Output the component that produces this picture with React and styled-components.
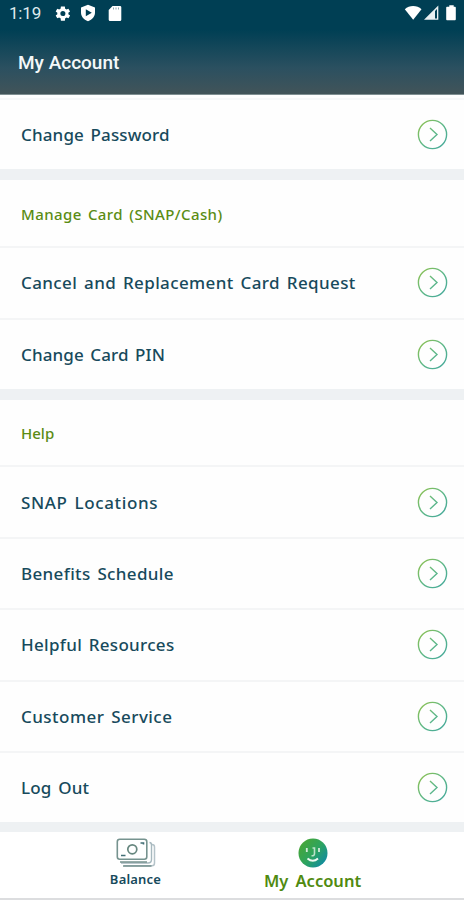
import React from 'react';
import styled, { createGlobalStyle } from 'styled-components';

const GlobalStyle = createGlobalStyle`
    * {
        box-sizing: border-box;
    }
    body {
        margin: 0;
        background: #ffffff;
    }
`;

const Screen = styled.div`
    width: 464px;
    height: 900px;
    display: flex;
    flex-direction: column;
    overflow: hidden;
    background: #fefefe;
    font-family: 'Noto Sans', sans-serif;
    font-weight: 500;
    color: #174a5c;
`;

const Header = styled.header`
    height: 95px;
    flex-shrink: 0;
    background: linear-gradient(#003f54 0px, #003f54 30px, #2b5060 68px, #425459 94px);
    border-bottom: 1px solid #7f8f92;
    color: #f4f8f9;
    font-family: Roboto, sans-serif;
`;

const StatusBar = styled.div`
    height: 26px;
    padding: 0 7px 0 9px;
    display: flex;
    align-items: center;
    justify-content: space-between;
`;

const StatusGroup = styled.div`
    display: flex;
    align-items: center;
`;

const Clock = styled.span`
    width: 44px;
    font-size: 17px;
    font-weight: 400;
    line-height: 26px;
    letter-spacing: -0.2px;
    color: #dfeaed;
`;

const PageTitle = styled.h1`
    margin: 0;
    padding: 25px 0 0 18px;
    font-size: 19px;
    line-height: 24px;
    font-weight: 500;
`;

const Section = styled.section`
    flex-shrink: 0;
    border-bottom: ${({ $gap }) => $gap || 11}px solid #eef1f3;
`;

const TopDivider = styled.div`
    height: 5px;
    border-bottom: 2px solid #f7f8f9;
`;

const SectionTitle = styled.h2`
    margin: 0;
    height: ${({ $height }) => $height || 68}px;
    padding: 1px 21px 0;
    display: flex;
    align-items: center;
    border-bottom: 2px solid #f4f5f6;
    font-size: 15px;
    font-weight: 500;
    letter-spacing: ${({ $tracking }) => $tracking || 0}px;
    word-spacing: 2px;
    color: #5a8c14;
`;

const Row = styled.div`
    height: ${({ $height }) => $height || 71.3}px;
    padding: 0 16px 0 21px;
    display: flex;
    align-items: center;
    justify-content: space-between;

    & + & {
        border-top: 2px solid #f4f5f6;
    }
`;

const RowLabel = styled.span`
    font-size: 17px;
    line-height: 24px;
    letter-spacing: ${({ $tracking }) => $tracking || 0}px;
    word-spacing: 2px;
    white-space: nowrap;
    padding-top: 1px;
`;

const TabBar = styled.nav`
    height: 67.5px;
    flex-shrink: 0;
    display: flex;
    background: #ffffff;
    border-bottom: 2px solid #dcdddf;
`;

const Tab = styled.div`
    width: ${({ $width }) => $width}px;
    margin-left: ${({ $offset }) => $offset}px;
    padding-top: 6px;
    display: flex;
    flex-direction: column;
    align-items: center;
`;

const TabLabel = styled.span`
    font-size: ${({ $active }) => ($active ? 16.5 : 13)}px;
    line-height: ${({ $active }) => ($active ? 25 : 23)}px;
    font-weight: 600;
    letter-spacing: ${({ $active }) => ($active ? 0 : 0.2)}px;
    word-spacing: ${({ $active }) => ($active ? 3 : 0)}px;
    color: ${({ $active }) => ($active ? '#508a10' : '#174a5c')};
    white-space: nowrap;
`;

const StatusIcon = styled.svg`
    margin-right: ${({ $space }) => $space || 0}px;
`;

const GearIcon = () => (
    <StatusIcon $space={8} width="19" height="19" viewBox="0 0 24 24">
        <path
            fill="#fff"
            fillRule="evenodd"
            d="M19.4 13c.1-.6.1-1.400 0-2l2.100-1.600-2-3.500-2.500 1a8 8 0 0 0-1.700-1L15 3h-5l-.4 2.900a8 8 0 0 0-1.700 1l-2.500-1-2 3.500L5.500 11a8 8 0 0 0 0 2l-2.100 1.600 2 3.500 2.500-1c.5.4 1.100.7 1.700 1L10 21h5l.4-2.900c.6-.3 1.200-.6 1.700-1l2.500 1 2-3.500zM12.500 15.200a3.200 3.200 0 1 1 0-6.400 3.200 3.200 0 0 1 0 6.400z"
        />
    </StatusIcon>
);

const ShieldIcon = () => (
    <StatusIcon $space={12} width="16" height="18" viewBox="0 0 16 18">
        <path
            fill="#fff"
            fillRule="evenodd"
            d="M8 .8 15 3.500v5c0 4-2.600 7-7 8.800C3.600 15.500 1 12.500 1 8.500v-5zM5.800 5.200v7L11.800 8.700z"
        />
    </StatusIcon>
);

const SdCardIcon = () => (
    <StatusIcon width="14" height="17" viewBox="0 0 14 17">
        <path fill="#fff" d="M4.500 1H12a1.300 1.300 0 0 1 1.300 1.300v12.500A1.300 1.300 0 0 1 12 16H2a1.300 1.300 0 0 1-1.300-1.200V5z" />
        <path stroke="#8fa9b2" strokeWidth="1" d="M5.500 2.500v2M8 2.500v2M10.500 2.500v2" />
    </StatusIcon>
);

const SignalIcons = () => (
    <StatusIcon width="54" height="18" viewBox="0 0 54 18">
        <path fill="#fff" d="M1.800 5.200C6.300.8 14 .8 18.500 5.200L10.200 15.800z" />
        <path fill="#e9f0f2" d="M21 15.800 35.300 1.500V15.800z" />
        <path fill="#003f54" d="M32 7 34 5V14.500H32z" />
        <path fill="#fff" d="M44 2.800h2.300V1.300h4.400v1.500H52a.9.9 0 0 1 .8.900v11.600a.9.9 0 0 1-.8.900h-8a.9.9 0 0 1-.8-.9V3.700a.9.9 0 0 1 .8-.9z" />
    </StatusIcon>
);

const ArrowIcon = () => (
    <svg width="31" height="31" viewBox="0 0 31 31" fill="none">
        <defs>
            <linearGradient id="arrowRing" x1="3" y1="3" x2="28" y2="28" gradientUnits="userSpaceOnUse">
                <stop offset="0" stopColor="#8cc152" />
                <stop offset="0.5" stopColor="#5fb888" />
                <stop offset="1" stopColor="#45a99b" />
            </linearGradient>
        </defs>
        <circle cx="15.500" cy="15.500" r="14.100" stroke="url(#arrowRing)" strokeWidth="1.400" />
        <path d="M13 9 20 15.500 13 22" stroke="url(#arrowRing)" strokeWidth="1.400" />
    </svg>
);

const CashIcon = () => (
    <svg width="40" height="30" viewBox="0 0 40 30" fill="none">
        <path d="M36 6.500Q38.500 6.500 38.500 9V25Q38.500 27.800 36 27.800H8" stroke="#b5c3c9" strokeWidth="1.500" />
        <path d="M33.500 4.500Q35.500 4.500 35.500 7V21.500Q35.500 25 32 25H5" stroke="#a6b8be" strokeWidth="1.400" />
        <path d="M7 28H35.500M4 24H31" stroke="#76918f" strokeWidth="1.300" />
        <rect x="1.300" y="1.300" width="29.500" height="20" rx="2.500" fill="#fff" stroke="#76938f" strokeWidth="1.600" />
        <circle cx="16.300" cy="11.300" r="4.500" stroke="#67877f" strokeWidth="1.700" />
        <path d="M5 17.500H9.500M24.500 5H27.500V6.500" stroke="#426f76" strokeWidth="1.600" />
    </svg>
);

const FaceIcon = () => (
    <svg width="30" height="30" viewBox="0 0 30 30" fill="none">
        <defs>
            <linearGradient id="faceFill" x1="4" y1="6" x2="27" y2="25" gradientUnits="userSpaceOnUse">
                <stop offset="0" stopColor="#45a63b" />
                <stop offset="0.5" stopColor="#2da45f" />
                <stop offset="1" stopColor="#118ba0" />
            </linearGradient>
        </defs>
        <circle cx="15" cy="15" r="14.500" fill="url(#faceFill)" />
        <path d="M8.800 10V14M21 10V14" stroke="#d3ecd9" strokeWidth="1.800" />
        <path d="M14.500 10H16.500V15.500Q16.500 18 13.500 17.800" stroke="#bce2ca" strokeWidth="1.600" />
        <path d="M9.500 20.500Q14.800 25 20 20.500" stroke="#effaf2" strokeWidth="1.900" />
    </svg>
);

const MenuRow = ({ label, tracking, height }) => (
    <Row $height={height}>
        <RowLabel $tracking={tracking}>{label}</RowLabel>
        <ArrowIcon />
    </Row>
);

const App = () => {
    return (
        <>
            <GlobalStyle />
            <Screen>
                <Header>
                    <StatusBar>
                        <StatusGroup>
                            <Clock>1:19</Clock>
                            <GearIcon />
                            <ShieldIcon />
                            <SdCardIcon />
                        </StatusGroup>
                        <SignalIcons />
                    </StatusBar>
                    <PageTitle>My Account</PageTitle>
                </Header>
                <Section>
                    <TopDivider />
                    <MenuRow label="Change Password" height={69} tracking={0.14} />
                </Section>
                <Section>
                    <SectionTitle $tracking={0.4}>Manage Card (SNAP/Cash)</SectionTitle>
                    <MenuRow label="Cancel and Replacement Card Request" height={69.5} tracking={0.39} />
                    <MenuRow label="Change Card PIN" height={71} tracking={0.1} />
                </Section>
                <Section $gap={10}>
                    <SectionTitle $height={67.5}>Help</SectionTitle>
                    <MenuRow label="SNAP Locations" height={70} tracking={0.62} />
                    <MenuRow label="Benefits Schedule" tracking={0.36} />
                    <MenuRow label="Helpful Resources" tracking={0.3} />
                    <MenuRow label="Customer Service" tracking={0.46} />
                    <MenuRow label="Log Out" height={71.3} tracking={0.2} />
                </Section>
                <TabBar>
                    <Tab $width={100} $offset={85.5}>
                        <CashIcon />
                        <TabLabel>Balance</TabLabel>
                    </Tab>
                    <Tab $width={120} $offset={67}>
                        <FaceIcon />
                        <TabLabel $active>My Account</TabLabel>
                    </Tab>
                </TabBar>
            </Screen>
        </>
    );
};

export default App;
